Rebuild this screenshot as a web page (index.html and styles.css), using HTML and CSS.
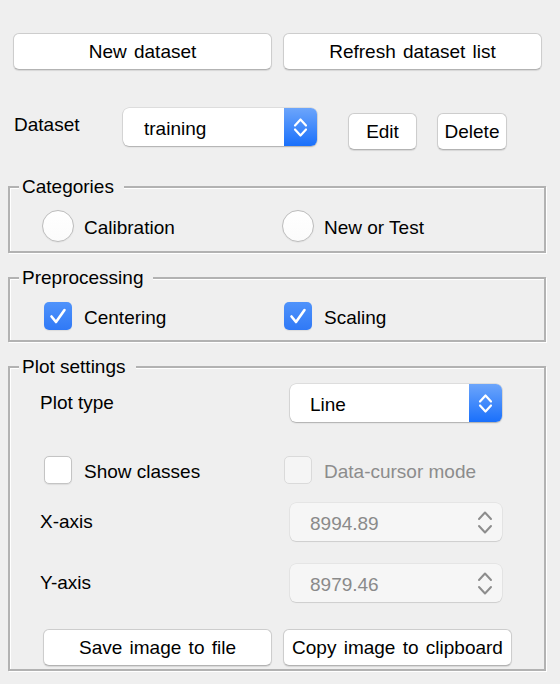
FILE: index.html
```html
<!DOCTYPE html>
<html>
<head>
<meta charset="utf-8">
<link rel="stylesheet" href="styles.css">
</head>
<body>
<div class="top-row">
  <button class="btn btn-wide">New dataset</button>
  <button class="btn btn-wide">Refresh dataset list</button>
</div>

<div class="dataset-row">
  <span class="ds-label">Dataset</span>
  <div class="popup popup-ds">
    <span class="popup-text">training</span>
    <span class="popup-arrows"><svg width="33" height="38" viewBox="0 0 33 38"><path d="M11 17.5 L16.5 11.5 L22 17.5 M11 21.5 L16.5 27.5 L22 21.5" fill="none" stroke="#fff" stroke-width="2.2" stroke-linecap="round" stroke-linejoin="round"/></svg></span>
  </div>
  <button class="btn btn-edit">Edit</button>
  <button class="btn btn-delete">Delete</button>
</div>

<fieldset class="panel panel-first">
  <legend>Categories</legend>
  <div class="opt-grid radio-grid">
    <label class="opt"><span class="radio"></span><span class="opt-text">Calibration</span></label>
    <label class="opt"><span class="radio"></span><span class="opt-text">New or Test</span></label>
  </div>
</fieldset>

<fieldset class="panel">
  <legend>Preprocessing</legend>
  <div class="opt-grid check-grid">
    <label class="opt opt-check"><span class="check on"><svg width="28" height="28" viewBox="0 0 28 28"><path d="M7.5 14.5 L12 20 L20.5 8" fill="none" stroke="#fff" stroke-width="2.6" stroke-linecap="round" stroke-linejoin="round"/></svg></span><span class="opt-text">Centering</span></label>
    <label class="opt opt-check"><span class="check on"><svg width="28" height="28" viewBox="0 0 28 28"><path d="M7.5 14.5 L12 20 L20.5 8" fill="none" stroke="#fff" stroke-width="2.6" stroke-linecap="round" stroke-linejoin="round"/></svg></span><span class="opt-text">Scaling</span></label>
  </div>
</fieldset>

<fieldset class="panel panel-plot">
  <legend>Plot settings</legend>
  <div class="prow">
    <span class="plabel">Plot type</span>
    <div class="popup popup-plot">
      <span class="popup-text">Line</span>
      <span class="popup-arrows"><svg width="33" height="38" viewBox="0 0 33 38"><path d="M11 17.5 L16.5 11.5 L22 17.5 M11 21.5 L16.5 27.5 L22 21.5" fill="none" stroke="#fff" stroke-width="2.2" stroke-linecap="round" stroke-linejoin="round"/></svg></span>
    </div>
  </div>
  <div class="opt-grid check-grid crow">
    <label class="opt opt-check"><span class="check"></span><span class="opt-text">Show classes</span></label>
    <label class="opt opt-check disabled"><span class="check off"></span><span class="opt-text">Data-cursor mode</span></label>
  </div>
  <div class="prow prow-x">
    <span class="plabel">X-axis</span>
    <div class="spin">
      <span class="spin-text">8994.89</span>
      <svg width="16" height="38" viewBox="0 0 16 38"><path d="M2 16 L8 9.5 L14 16 M2 23 L8 29.5 L14 23" fill="none" stroke="#8d8d8d" stroke-width="2" stroke-linecap="round" stroke-linejoin="round"/></svg>
    </div>
  </div>
  <div class="prow prow-y">
    <span class="plabel">Y-axis</span>
    <div class="spin">
      <span class="spin-text">8979.46</span>
      <svg width="16" height="38" viewBox="0 0 16 38"><path d="M2 16 L8 9.5 L14 16 M2 23 L8 29.5 L14 23" fill="none" stroke="#8d8d8d" stroke-width="2" stroke-linecap="round" stroke-linejoin="round"/></svg>
    </div>
  </div>
  <div class="brow">
    <button class="btn btn-bottom">Save image to file</button>
    <button class="btn btn-bottom">Copy image to clipboard</button>
  </div>
</fieldset>
</body>
</html>
```

FILE: styles.css
```css
* { box-sizing: border-box; }

html, body {
  margin: 0;
  background: #efefef;
}

body {
  font-family: "Liberation Sans", Arial, sans-serif;
  font-size: 19px;
  color: #000;
  width: 560px;
  height: 684px;
  overflow: hidden;
}

.btn {
  font: inherit;
  word-spacing: 2px;
  color: #000;
  background: #fff;
  border: 1px solid #cdcdcd;
  border-bottom-color: #b3b3b3;
  border-radius: 6px;
  box-shadow: 0 1px 1px rgba(0, 0, 0, 0.1);
  height: 37px;
  padding: 0;
  white-space: nowrap;
}

.top-row {
  display: flex;
  gap: 11px;
  padding: 33px 0 0 13px;
}

.btn-wide { width: 259px; }

.dataset-row {
  display: flex;
  align-items: flex-start;
  margin-top: 38px;
  padding-left: 14px;
}

.ds-label {
  width: 109px;
  line-height: 34px;
}

.popup {
  display: flex;
  height: 38px;
  background: #fff;
  border-radius: 6px;
  box-shadow: 0 0 0 0.5px rgba(0, 0, 0, 0.14), 0 1px 1.5px rgba(0, 0, 0, 0.22);
  overflow: hidden;
}

.popup-ds { width: 194px; }
.popup-plot { width: 212px; }

.popup-text {
  flex: 1;
  padding: 2px 0 0 21px;
  line-height: 38px;
}

.popup-plot .popup-text { padding-left: 20px; }

.popup-arrows {
  width: 33px;
  display: flex;
  background: linear-gradient(#6ca5fb, #1a70fb);
}

.btn-edit { margin: 5px 0 0 31px; width: 69px; }
.btn-delete { margin: 5px 0 0 20px; width: 70px; }

.panel {
  margin: 14px 0 0 8px;
  width: 538px;
  min-width: 0;
  padding: 0;
  border: 2px solid #b2b2b2;
  box-shadow: inset 1px 1px 0 #fff, 1px 1px 0 #fff;
}

.panel-first { margin-top: 26px; }

.panel legend {
  font-size: 19px;
  line-height: 22px;
  padding: 0 10px 0 3px;
  margin-left: 9px;
  background: #efefef;
}

.opt-grid {
  display: grid;
  grid-template-columns: 240px 240px;
}

.radio-grid { padding: 12px 0 9px 32px; }
.check-grid { padding: 13px 0 10px 34px; }

.opt {
  display: flex;
  align-items: center;
  gap: 10px;
  white-space: nowrap;
}

.opt-text { padding-top: 3px; }

.opt-check { gap: 12px; }

.radio {
  width: 32px;
  height: 32px;
  border-radius: 50%;
  border: 1px solid #bdbdbd;
  background: linear-gradient(#ffffff, #fbfbfb);
  box-shadow: 0 0.5px 1px rgba(0, 0, 0, 0.08);
}

.check {
  width: 28px;
  height: 28px;
  border-radius: 5px;
  background: #fff;
  border: 1px solid #c4c4c4;
  box-shadow: 0 0.5px 1px rgba(0, 0, 0, 0.08);
  display: flex;
}

.check.on {
  border: none;
  background: linear-gradient(#4f93fb, #3079f6);
}

.check.off {
  background: #f5f5f5;
  border-color: #dadada;
  box-shadow: none;
}

.disabled { color: #8c8c8c; }

.prow {
  display: flex;
  align-items: center;
  padding-left: 30px;
  margin-top: 6px;
}

.plabel { width: 250px; }

.crow { padding: 0 0 0 34px; margin-top: 34px; }

.prow-x { margin-top: 19px; }
.prow-y { margin-top: 23px; }

.spin {
  width: 212px;
  height: 38px;
  display: flex;
  align-items: center;
  justify-content: space-between;
  padding: 0 9px 0 20px;
  background: #f6f6f6;
  border-radius: 6px;
  box-shadow: 0 0 0 0.5px rgba(0, 0, 0, 0.08), 0 1px 1px rgba(0, 0, 0, 0.1);
  color: #8a8a8a;
}

.spin-text { padding-top: 4px; }

.brow {
  display: flex;
  gap: 11px;
  padding: 0 0 3px 33px;
  margin-top: 27px;
}

.btn-bottom { width: 229px; }
```
